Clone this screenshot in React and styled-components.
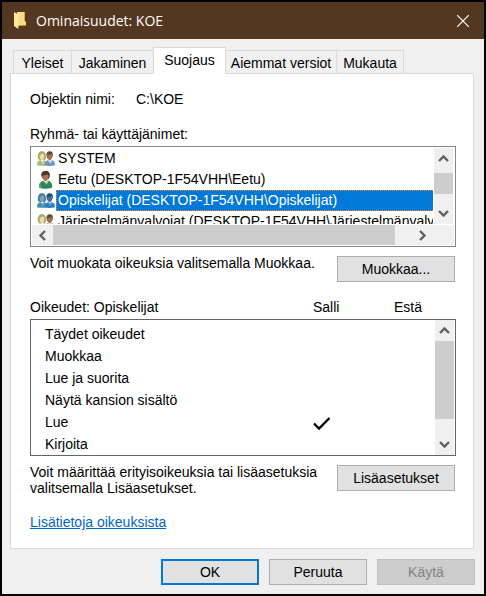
import React, { useState } from "react";
import styled, { createGlobalStyle } from "styled-components";

const GlobalStyle = createGlobalStyle`
  * { box-sizing: border-box; }
  body {
    margin: 0;
    background: #f0f0f0;
    color: #000;
    font: 14px/16px "Liberation Sans", Arial, sans-serif;
  }
  button { font: inherit; color: inherit; }
`;

const Dialog = styled.main`
  display: flex;
  flex-direction: column;
  min-height: 100vh;
  border: 2px solid #000;
  background: #f0f0f0;
`;

const TitleBar = styled.header`
  display: flex;
  align-items: center;
  height: 37px;
  padding: 0 15px 0 12px;
  background: #543720;
  color: #fff;
`;

const Title = styled.h1`
  flex: 1;
  margin: 0 0 0 10px;
  font: 400 14px/20px "Open Sans", "Noto Sans", sans-serif;
`;

const CloseButton = styled.button`
  display: flex;
  padding: 0;
  border: 0;
  background: none;
`;

const Content = styled.div`
  flex: 1;
  display: flex;
  flex-direction: column;
  padding: 8px 10px 10px 8px;
`;

const TabList = styled.div`
  display: flex;
  align-items: flex-end;
  height: 27px;
  padding-left: 3px;
  margin-bottom: -1px;
`;

const Tab = styled.button`
  position: relative;
  width: ${(p) => p.$width}px;
  height: ${(p) => (p.$active ? 27 : 24)}px;
  padding: ${(p) => (p.$active ? "0 0 1px" : "2px 0 0")};
  border: 1px solid #d9d9d9;
  border-left-width: ${(p) => (p.$first || p.$active ? 1 : 0)}px;
  border-right-width: ${(p) => (p.$beforeActive ? 0 : 1)}px;
  border-bottom-color: ${(p) => (p.$active ? "#fff" : "#d9d9d9")};
  background: ${(p) => (p.$active ? "#fff" : "#f0f0f0")};
  white-space: nowrap;
`;

const Panel = styled.section`
  flex: 1;
  padding: 17px 17px 17px 19px;
  border: 1px solid #d9d9d9;
  background: #fff;
`;

const ObjectRow = styled.dl`
  display: grid;
  grid-template-columns: 106px 1fr;
  margin: 0 0 19px;
  dd { margin: 0; }
`;

const GroupLabel = styled.h2`
  margin: 0 0 4px;
  font: inherit;
`;

const ListFrame = styled.div`
  display: grid;
  grid-template-columns: 1fr 20px;
  grid-template-rows: 76px 20px;
  gap: 1px;
  height: 101px;
  padding: 1px;
  border: 1px solid #828790;
`;

const UserList = styled.ul`
  min-width: 0;
  margin: 0;
  padding: 0 0 0 5px;
  overflow: hidden;
  list-style: none;
`;

const UserRow = styled.li`
  display: flex;
  align-items: center;
  height: 21px;
  white-space: nowrap;
  cursor: default;
  svg { flex: none; }
`;

const UserName = styled.span`
  flex: 1;
  min-width: 0;
  margin-left: 1px;
  overflow: hidden;
  height: 21px;
  padding-left: 1px;
  line-height: 19px;
  border: 1px ${(p) => (p.$selected ? "dotted #ff8728" : "solid transparent")};
  border-right: 0;
  background: ${(p) => (p.$selected ? "#0078d7" : "transparent")};
  color: ${(p) => (p.$selected ? "#fff" : "#000")};
`;

const VerticalBar = styled.div`
  display: flex;
  flex-direction: column;
  width: ${(p) => p.$width}px;
  background: #f0f0f0;
`;

const HorizontalBar = styled.div`
  display: flex;
  grid-column: 1 / -1;
  padding-right: 22px;
  background: #f0f0f0;
`;

const ArrowButton = styled.button`
  display: flex;
  align-items: center;
  justify-content: center;
  flex: none;
  width: ${(p) => p.$width}px;
  height: ${(p) => p.$height}px;
  padding: 0;
  border: 0;
  background: none;
`;

const VerticalThumb = styled.div`
  height: ${(p) => p.$height}px;
  margin-top: ${(p) => p.$top || 0}px;
  margin-bottom: auto;
  background: #cdcdcd;
`;

const HorizontalThumb = styled.div`
  flex: 1;
  margin-right: 18px;
  background: #cdcdcd;
`;

const ActionRow = styled.div`
  display: flex;
  justify-content: space-between;
  align-items: flex-start;
  gap: 10px;
  margin-top: 8px;
  padding-right: 1px;
  button { margin-top: 1px; }
`;

const Hint = styled.p`
  margin: 0;
  flex: 1;
`;

const PushButton = styled.button`
  flex: none;
  width: ${(p) => p.$width}px;
  height: 26px;
  padding: 0;
  border: ${(p) => (p.$primary ? "2px solid #0078d7" : "1px solid #adadad")};
  background: #e1e1e1;
  &:disabled {
    border-color: #bfbfbf;
    background: #ccc;
    color: #838383;
  }
`;

const PermissionTable = styled.table`
  flex: 1;
  width: 100%;
  border-collapse: collapse;
  table-layout: fixed;
  th, td { padding: 0; font-weight: 400; text-align: left; }
`;

const HeaderTable = styled(PermissionTable)`
  margin: 17px 0 4px;
  th { height: 16px; }
  th:nth-child(2) { width: 81px; }
  th:nth-child(3) { width: 62px; }
`;

const PermissionFrame = styled.div`
  display: flex;
  align-items: stretch;
  height: 137px;
  padding-right: 1px;
  border: 1px solid #646464;
`;

const BodyScroller = styled.div`
  flex: 1;
  padding: 3px 0 0 14px;
  overflow: hidden;
`;

const BodyTable = styled(PermissionTable)`
  tr { height: 22px; }
  td { width: 81px; }
  td:last-child { width: 41px; }
`;

const CheckIcon = styled.svg`
  display: block;
  margin-top: 3px;
`;

const HelpLink = styled.a`
  display: inline-block;
  margin-top: 18px;
  color: #0066cc;
`;

const Footer = styled.footer`
  display: flex;
  justify-content: flex-end;
  gap: 10px;
  padding: 0 9px 9px 0;
`;

const arrowPaths = {
  up: "M2 9 L6.500 4.500 L11 9",
  down: "M2 4 L6.500 8.500 L11 4",
  left: "M9 2 L4.500 6.500 L9 11",
  right: "M4 2 L8.500 6.500 L4 11",
};

const Arrow = ({ direction }) => (
  <svg width="13" height="13" viewBox="0 0 13 13" fill="none" stroke="#606060" strokeWidth="2.4" aria-hidden="true">
    <path d={arrowPaths[direction]} />
  </svg>
);

const FolderIcon = () => (
  <svg width="12" height="17" viewBox="0 0 12 17" aria-hidden="true">
    <path d="M0 0h10.5v9l1.5.8V13H3V0z" fill="#eac15c" />
    <path d="M3 0h7.5v9L12 10v2.5L3 14z" fill="#f8dc83" />
    <path d="M0 0l4.4 2.4V17L0 14z" fill="#ffe9a2" />
    <path d="M4.4 14l1-1H12v.8H5z" fill="#d9a93f" />
  </svg>
);

const CloseIcon = () => (
  <svg width="12" height="12" viewBox="0 0 12 12" stroke="#fff" strokeWidth="1.2" aria-hidden="true">
    <path d="M0 0l12 12M12 0L0 12" />
  </svg>
);

const GroupIcon = ({ selected }) => {
  const c = selected
    ? { hair: "#3f7f9b", face: "#78a5ba", top: "#428fae", hair2: "#1c4a75", face2: "#3f73a6", top2: "#2f7dc4", collar: "#6aa9db" }
    : { hair: "#a9a560", face: "#f0d8b0", top: "#a0bd70", hair2: "#54473b", face2: "#a0714e", top2: "#6d94c6", collar: "#c4d5ea" };
  return (
    <svg width="18" height="15" viewBox="0 0 18 15" aria-hidden="true">
      <path d="M.8 7.5C.6 3 1.700.3 4.800.3S9.400 3 9 7.500L7.500 9h-5z" fill={c.hair} />
      <path d="M2.600 4C4 3.800 5 3.100 5.700 2l1.800 2.500c0 2.600-.8 4.700-2.500 4.700S2.500 6.600 2.600 4z" fill={c.face} />
      <path d="M0 14.200c0-3 .9-4.500 3.500-5.200l1.800 1.800L7 9c2.400.7 3.200 2 3.200 5.200-2.400.8-7.800.8-10.200 0z" fill={c.top} />
      <path d="M3.500 9l1.800 1.800L7 9l1 1.200-2.600 3.200z" fill={c.face} opacity=".8" />
      <path d="M9.500 4.800C9.100 1.800 10.400.2 12.800.2c2.500 0 3.400 1.600 3 4.600l-1 2.500h-4.500z" fill={c.hair2} />
      <path d="M10 3.700c2 .3 3.700-.3 4.400-1.200.8.800 1 1.700.8 2.700-.3 2.200-1 4-2.500 4S10.100 7 10 3.700z" fill={c.face2} />
      <path d="M8 14.300c-.1-3.100 1-4.600 3.200-5.400l2 1.700L14.500 8.900c2.500.7 3.500 2.300 3.500 5.400-2.800.9-7.500.9-10 0z" fill={c.top2} />
      <path d="M11.300 8.900l1.900 1.700 1.300-1.700.6 1-1.500 2.800-2.900-3z" fill={c.collar} />
    </svg>
  );
};

const PersonIcon = () => (
  <svg width="18" height="18" viewBox="0 0 18 18" aria-hidden="true">
    <path d="M4.300 5C3.900 1.800 5.600 0 8.700 0c3.200 0 4.500 2 4 5.400L11.500 8H6z" fill="#44362c" />
    <path d="M5.200 4.500c2.400.2 4.300-.2 5.200-1.400 1 .7 1.300 1.700 1.100 2.700-.4 2.500-1.300 4.200-3 4.200S5.300 7.500 5.200 4.500z" fill="#a6744d" />
    <path d="M2 16.400c-.1-3.700 1.200-5.600 4.200-6.600l2.600 2 1.900-2.200c3.300.8 4.600 2.700 4.600 6.800-3.500 1.700-10 1.800-13.300 0z" fill="#308755" />
    <path d="M6.300 9.700l2.500 2.100 1.800-2.200.9.900-2 3z" fill="#b9dcb3" />
    <path d="M2 16.400c0-2 .4-3.600 1.300-4.800l1.300 5.700z" fill="#59a86d" />
  </svg>
);

const CheckMark = () => (
  <CheckIcon width="18" height="14" viewBox="0 0 18 14" role="img" aria-label="Sallittu">
    <path d="M1 6.500l5 5L16.500 1" fill="none" stroke="#000" strokeWidth="2.300" />
  </CheckIcon>
);

const ScrollArrow = ({ direction, label, width = 19, height = 20 }) => (
  <ArrowButton type="button" aria-label={label} $width={width} $height={height}>
    <Arrow direction={direction} />
  </ArrowButton>
);

const tabs = [
  { name: "Yleiset", width: 59 },
  { name: "Jakaminen", width: 81 },
  { name: "Suojaus", width: 73 },
  { name: "Aiemmat versiot", width: 111 },
  { name: "Mukauta", width: 67 },
];

const users = [
  { name: "SYSTEM", group: true },
  { name: "Eetu (DESKTOP-1F54VHH\\Eetu)", group: false },
  { name: "Opiskelijat (DESKTOP-1F54VHH\\Opiskelijat)", group: true },
  { name: "Järjestelmänvalvojat (DESKTOP-1F54VHH\\Järjestelmänvalvojat)", group: true },
];

const permissions = [
  { name: "Täydet oikeudet" },
  { name: "Muokkaa" },
  { name: "Lue ja suorita" },
  { name: "Näytä kansion sisältö" },
  { name: "Lue", allow: true },
  { name: "Kirjoita" },
];

export default function App() {
  const [activeTab, setActiveTab] = useState(2);
  const [selectedUser, setSelectedUser] = useState(2);

  return (
    <>
      <GlobalStyle />
      <Dialog>
        <TitleBar>
          <FolderIcon />
          <Title>Ominaisuudet: KOE</Title>
          <CloseButton type="button" aria-label="Sulje"><CloseIcon /></CloseButton>
        </TitleBar>
        <Content>
          <TabList role="tablist">
            {tabs.map((tab, i) => (
              <Tab
                key={tab.name}
                type="button"
                role="tab"
                aria-selected={i === activeTab}
                $active={i === activeTab}
                $first={i === 0}
                $beforeActive={i === activeTab - 1}
                $width={tab.width}
                onClick={() => setActiveTab(i)}
              >
                {tab.name}
              </Tab>
            ))}
          </TabList>
          <Panel role="tabpanel">
            <ObjectRow>
              <dt>Objektin nimi:</dt>
              <dd>C:\KOE</dd>
            </ObjectRow>
            <GroupLabel id="users-label">Ryhmä- tai käyttäjänimet:</GroupLabel>
            <ListFrame>
              <UserList role="listbox" aria-labelledby="users-label">
                {users.map((user, i) => (
                  <UserRow key={user.name} role="option" aria-selected={i === selectedUser} onClick={() => setSelectedUser(i)}>
                    {user.group ? <GroupIcon selected={i === selectedUser} /> : <PersonIcon />}
                    <UserName $selected={i === selectedUser}>{user.name}</UserName>
                  </UserRow>
                ))}
              </UserList>
              <VerticalBar $width={19}>
                <ScrollArrow direction="up" label="Vieritä ylös" height={21} />
                <VerticalThumb $height={21} $top={4} />
                <ScrollArrow direction="down" label="Vieritä alas" height={22} />
              </VerticalBar>
              <HorizontalBar>
                <ScrollArrow direction="left" label="Vieritä vasemmalle" width={21} />
                <HorizontalThumb />
                <ScrollArrow direction="right" label="Vieritä oikealle" />
              </HorizontalBar>
            </ListFrame>
            <ActionRow>
              <Hint>Voit muokata oikeuksia valitsemalla Muokkaa.</Hint>
              <PushButton type="button" $width={118}>Muokkaa...</PushButton>
            </ActionRow>
            <HeaderTable>
              <thead>
                <tr>
                  <th scope="col">Oikeudet: Opiskelijat</th>
                  <th scope="col">Salli</th>
                  <th scope="col">Estä</th>
                </tr>
              </thead>
            </HeaderTable>
            <PermissionFrame>
              <BodyScroller>
                <BodyTable aria-label="Oikeudet: Opiskelijat">
                  <tbody>
                    {permissions.map((permission) => (
                      <tr key={permission.name}>
                        <th scope="row">{permission.name}</th>
                        <td>{permission.allow && <CheckMark />}</td>
                        <td />
                      </tr>
                    ))}
                  </tbody>
                </BodyTable>
              </BodyScroller>
              <VerticalBar $width={19}>
                <ScrollArrow direction="up" label="Vieritä ylös" height={21} />
                <VerticalThumb $height={78} />
                <ScrollArrow direction="down" label="Vieritä alas" height={22} />
              </VerticalBar>
            </PermissionFrame>
            <ActionRow>
              <Hint>Voit määrittää erityisoikeuksia tai lisäasetuksia valitsemalla Lisäasetukset.</Hint>
              <PushButton type="button" $width={118}>Lisäasetukset</PushButton>
            </ActionRow>
            <HelpLink href="#oikeudet">Lisätietoja oikeuksista</HelpLink>
          </Panel>
        </Content>
        <Footer>
          <PushButton type="button" $width={98} $primary>OK</PushButton>
          <PushButton type="button" $width={98}>Peruuta</PushButton>
          <PushButton type="button" $width={98} disabled>Käytä</PushButton>
        </Footer>
      </Dialog>
    </>
  );
}
